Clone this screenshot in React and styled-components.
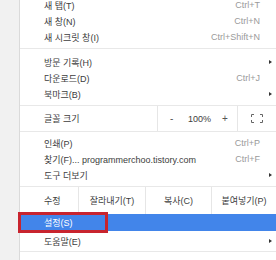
import React from "react";
import styled, { createGlobalStyle } from "styled-components";

const Global = createGlobalStyle`
  html, body { margin: 0; padding: 0; background: #fff; overflow: hidden; }
  body { font-family: "Liberation Sans", "Noto Sans CJK KR", sans-serif; }
`;

const Page = styled.div`
  display: flex;
  width: 276px;
  height: 260px;
  overflow: hidden;
`;

const Gutter = styled.div`
  width: 19px;
  flex: none;
  background: #f1f1f1;
  border-right: 1px solid #dadada;
`;

const Menu = styled.div`
  flex: 1;
  display: flex;
  flex-direction: column;
  margin-top: -3px;
  font-size: 9px;
  color: #3d3d3d;
  & > * { flex-shrink: 0; }
`;

const Group = styled.div`
  display: flex;
  flex-direction: column;
  padding-top: ${(p) => p.$top || 0}px;
  padding-bottom: ${(p) => p.$bottom || 0}px;
  border-bottom: ${(p) => (p.$noline ? "none" : "1px solid #e8e8e8")};
  & > * { flex-shrink: 0; }
`;

const Row = styled.div`
  position: relative;
  display: grid;
  grid-template-columns: 1fr auto 16px;
  align-items: center;
  height: ${(p) => p.$h || 16}px;
  margin-top: ${(p) => p.$mt || 0}px;
  padding-left: 24px;
  background: ${(p) => (p.$active ? "#4285ea" : "transparent")};
  color: ${(p) => (p.$active ? "#fff" : "inherit")};
  white-space: nowrap;
`;

const Shortcut = styled.span`
  color: #9a9a9a;
`;

const Arrow = styled.span`
  justify-self: center;
  margin-left: 4px;
  width: 0;
  height: 0;
  border-top: 2.5px solid transparent;
  border-bottom: 2.5px solid transparent;
  border-left: 3.5px solid #333;
`;

const Highlight = styled.div`
  position: absolute;
  left: -2px;
  top: -2px;
  width: 90px;
  height: 21px;
  box-sizing: border-box;
  border: 3px solid #c8242e;
  pointer-events: none;
`;

const SplitRow = styled.div`
  display: flex;
  align-items: stretch;
  height: ${(p) => p.$h}px;
  border-bottom: ${(p) => (p.$noline ? "none" : "1px solid #e8e8e8")};
  white-space: nowrap;
`;

const SplitLabel = styled.div`
  display: flex;
  align-items: center;
  padding-left: 24px;
  width: ${(p) => p.$w}px;
  flex: none;
  box-sizing: border-box;
`;

const Cell = styled.div`
  display: flex;
  align-items: center;
  justify-content: ${(p) => p.$justify || "center"};
  width: ${(p) => p.$w}px;
  flex: none;
  box-sizing: border-box;
  border-left: 1px solid #e6e6e6;
  padding-left: ${(p) => p.$pl || 0}px;
`;

const ZoomSign = styled.span`
  color: #555;
  font-size: 10px;
  width: ${(p) => p.$w || "auto"};
`;

const ZoomValue = styled.span`
  width: 34px;
`;

const Spacer = styled.div`
  height: 12px;
`;

const FullIcon = () => (
  <svg width="12" height="9" viewBox="0 0 12 9" fill="none" stroke="#666" strokeWidth="1">
    <path d="M0.5 3V0.5H3M9 0.5H11.5V3M11.5 6V8.5H9M3 8.5H0.5V6" />
  </svg>
);

const Item = ({ label, shortcut, arrow, children, ...rest }) => (
  <Row {...rest}>
    <span>{label}</span>
    {shortcut ? <Shortcut>{shortcut}</Shortcut> : <span />}
    {arrow ? <Arrow /> : <span />}
    {children}
  </Row>
);

export default function App() {
  return (
    <>
      <Global />
      <Page>
        <Gutter />
        <Menu>
          <Group $bottom={3}>
            <Item label="새 탭(T)" shortcut="Ctrl+T" />
            <Item label="새 창(N)" shortcut="Ctrl+N" />
            <Item label="새 시크릿 창(I)" shortcut="Ctrl+Shift+N" />
          </Group>
          <Group $top={5} $bottom={3}>
            <Item label="방문 기록(H)" arrow />
            <Item label="다운로드(D)" shortcut="Ctrl+J" />
            <Item label="북마크(B)" arrow />
          </Group>
          <SplitRow $h={25}>
            <SplitLabel $w={137}>글꼴 크기</SplitLabel>
            <Cell $w={80} $justify="flex-start" $pl={12}>
              <ZoomSign $w="18px">-</ZoomSign>
              <ZoomValue>100%</ZoomValue>
              <ZoomSign>+</ZoomSign>
            </Cell>
            <Cell $w={39}>
              <FullIcon />
            </Cell>
          </SplitRow>
          <Group $top={3} $bottom={3}>
            <Item label="인쇄(P)" shortcut="Ctrl+P" />
            <Item label="찾기(F)... programmerchoo.tistory.com" shortcut="Ctrl+F" />
            <Item label="도구 더보기" arrow />
          </Group>
          <SplitRow $h={27} $noline>
            <SplitLabel $w={58}>수정</SplitLabel>
            <Cell $w={67}>잘라내기(T)</Cell>
            <Cell $w={66}>복사(C)</Cell>
            <Cell $w={65}>붙여넣기(P)</Cell>
          </SplitRow>
          <Group $bottom={2}>
            <Item label="설정(S)" $active $h={17}>
              <Highlight />
            </Item>
            <Item label="도움말(E)" arrow $mt={2} />
          </Group>
          <Spacer />
        </Menu>
      </Page>
    </>
  );
}
